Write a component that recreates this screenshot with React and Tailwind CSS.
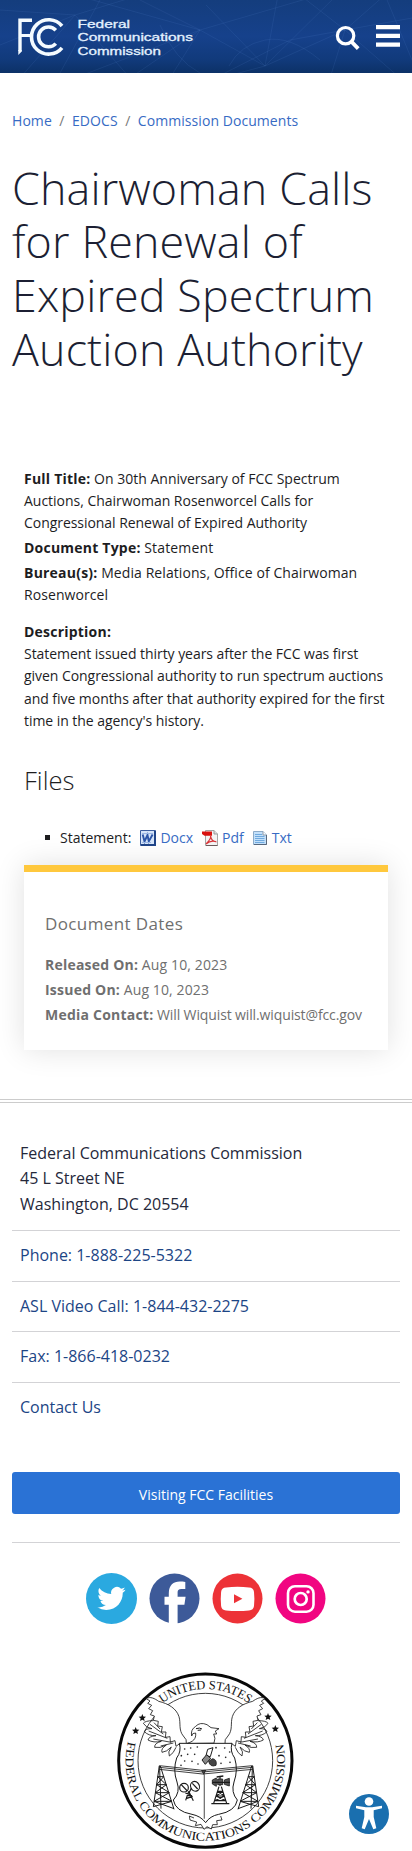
import React from "react";

function HeaderPattern() {
  return (
    <svg className="absolute inset-0" width="412" height="73" viewBox="0 0 412 73" fill="none" stroke="#6f9be0" strokeOpacity="0.11">
      <path d="M75 -5L200 30L330 -8M200 30L265 66L340 -8M265 66L206 5M265 66L278 -5M265 66L220 78M200 30L130 78M200 30L75 78M0 45L75 15L130 78M75 15L20 78M140 0L200 30L170 78M265 66L345 30L412 18M345 30L300 -5M345 30L330 78M345 30L400 78M345 30L385 -5L412 60M100 0L60 73M215 78L290 40L345 30M0 10L75 15L140 -5" />
      <path d="M229 66Q240 45 265 40T320 60M160 25Q175 60 200 73" />
    </svg>
  );
}

function Logo() {
  return (
    <svg width="180" height="44" viewBox="15 14 180 44" fill="none" role="img" aria-label="Federal Communications Commission">
      <g stroke="#f4fbff">
        <path d="M20 51V20.200H32" strokeWidth="3.400" />
        <path d="M21 35.500H32" strokeWidth="3" />
        <path d="M62 26A17.200 17.200 0 1 0 62 47.800" strokeWidth="3.600" />
        <path d="M55.800 30.200A9.900 9.900 0 1 0 55.800 43.600" strokeWidth="3.600" />
      </g>
      <path d="M18.300 50H21.700V51.500L18.300 55Z" fill="#f4fbff" />
      <g fill="#e4f2ff" fontFamily="'Liberation Sans', Arial, sans-serif" fontSize="11.200" stroke="#e4f2ff" strokeWidth="0.300">
        <text x="77.500" y="28" textLength="52.500" lengthAdjust="spacingAndGlyphs">Federal</text>
        <text x="77.500" y="41.300" textLength="115.500" lengthAdjust="spacingAndGlyphs">Communications</text>
        <text x="77.500" y="54.800" textLength="83.500" lengthAdjust="spacingAndGlyphs">Commission</text>
      </g>
    </svg>
  );
}

function Header() {
  return (
    <header className="relative h-[73px] overflow-hidden bg-[linear-gradient(180deg,#143d7d_0%,#16418b_50%,#113a7b_82%,#0c3167_100%)]">
      <HeaderPattern />
      <div className="relative flex items-start justify-between pl-[15px] pr-3 pt-3.5">
        <Logo />
        <div className="flex gap-4 pt-[10px]">
          <svg width="25" height="27" viewBox="0 0 25 27" fill="none" stroke="#fff">
            <circle cx="10.6" cy="11.7" r="8.2" strokeWidth="3.2" />
            <path d="M16.4 17.6L23.2 24.6" strokeWidth="3.8" />
          </svg>
          <svg width="24" height="24" viewBox="0 0 24 24" fill="#fff">
            <path d="M0 1h24v4.200H0zM0 9.800h24v4.200H0zM0 18.600h24v4.200H0z" />
          </svg>
        </div>
      </div>
    </header>
  );
}

const DocxIcon = () => (
  <svg width="16" height="16" viewBox="0 0 16 16" fill="none">
    <path d="M.5.5h15v15H.5z" fill="#d5e4f8" stroke="#3d5f9f" />
    <path d="M15 1v14H1" stroke="#1f4488" strokeWidth="2" />
    <path d="M2.7 4.5L4.5 11.4L7.5 5L8.8 11.4L12.6 4.5" stroke="#2c56a8" strokeWidth="1.9" />
    <path d="M2 3.5h11M2 12.5h9" stroke="#9bb7e4" />
  </svg>
);
const PdfIcon = () => (
  <svg width="16" height="16" viewBox="0 0 16 16" fill="none">
    <path d="M3.5.5H12l3.5 3.5v11.5h-12z" fill="#f3f3f3" stroke="#a5a5a5" />
    <path d="M12 .5v3.5h3.5" fill="#ddd" stroke="#999" />
    <path d="M4 15.5h11.5" stroke="#6b5b5b" />
    <path d="M0 1.5h10v4.3H2.5L0 4z" fill="#d8120f" />
    <path d="M4 14C7 11 9 7.5 8.6 6C9 9 11 11.5 14.3 11.8C10.5 10.5 7 11.5 4 14" stroke="#d9363a" strokeWidth="1.2" />
  </svg>
);
const TxtIcon = () => (
  <svg width="14" height="16" viewBox="0 0 14 16" fill="none">
    <path d="M.5 1.5H10l3.500 3.500v9.500H.5z" fill="#c3e0fa" stroke="#8cabc9" />
    <path d="M10 1.500v3.500h3.500" fill="#fff" stroke="#8a98a8" />
    <path d="M13.500 5v9.500H1" stroke="#56677c" />
    <path d="M2 4.500h7M2 6.500h9.500M2 8.500h9.500M2 10.500h9.500M2 12.500h9.500" stroke="#6fa9de" />
  </svg>
);

function Files() {
  return (
    <ul className="flex h-[22px] items-center pl-[21px] text-[#1d1d1f]">
      <li className="flex items-center leading-[22px]">
        <span className="mr-[10px] h-[5px] w-[5px] bg-[#1d1d1f]" />
        <span className="mr-[9px]">Statement:</span>
        <a className="mr-[9px] flex items-center gap-1 text-[#376bc4]"><DocxIcon />Docx</a>
        <a className="mr-[9px] flex items-center gap-1 text-[#376bc4]"><PdfIcon />Pdf</a>
        <a className="flex items-center gap-[5px] text-[#376bc4]"><TxtIcon />Txt</a>
      </li>
    </ul>
  );
}

function Socials() {
  return (
    <div className="flex justify-center gap-3 pt-[29.500px]">
      <svg width="51" height="51" viewBox="0 0 51 51">
        <circle cx="25.500" cy="25.500" r="25.500" fill="#2aa9e0" />
        <path transform="translate(11.300 11.300) scale(1.180)" fill="#fff" d="M23.950 4.570a10 10 0 0 1-2.820.770 4.960 4.960 0 0 0 2.160-2.720c-.950.550-2 .960-3.130 1.180a4.920 4.920 0 0 0-8.380 4.480C7.690 8.100 4.070 6.130 1.640 3.160a4.820 4.820 0 0 0-.670 2.480c0 1.710.870 3.210 2.190 4.100a4.900 4.900 0 0 1-2.230-.620v.060a4.920 4.920 0 0 0 3.950 4.830 5 5 0 0 1-2.210.080 4.940 4.940 0 0 0 4.600 3.420A9.870 9.870 0 0 1 0 19.540a13.990 13.990 0 0 0 7.550 2.210c9.050 0 14-7.500 14-13.990 0-.210 0-.420-.020-.630a9.940 9.940 0 0 0 2.420-2.560z" />
      </svg>
      <svg width="51" height="51" viewBox="0 0 51 51">
        <circle cx="25.500" cy="25.500" r="25" fill="#3d5a99" />
        <path fill="#fff" d="M19.800 51V31.800h-4.300v-8h4.300v-3.600c0-8 4.600-11.600 11-11.600 2 0 3.800.1 5.500.4v7h-3.900c-3 0-3.800 1.400-3.800 3.600v4.200h8l-1.200 8h-6.800V51z" />
      </svg>
      <svg width="51" height="51" viewBox="0 0 51 51">
        <circle cx="25.500" cy="25.500" r="25" fill="#ed3237" />
        <path fill="#fff" d="M14 14.500Q25.500 13.200 37 14.500Q41.500 14.700 42 19Q42.800 26 42 33Q41.500 37.200 37 37.500Q25.500 38.700 14 37.500Q9.600 37.200 9.100 33Q8.400 26 9.100 19Q9.600 14.700 14 14.500z" />
        <path fill="#ed3237" d="M22 21.300L30.400 25.800L22 30.200z" />
      </svg>
      <svg width="51" height="51" viewBox="0 0 51 51" fill="none">
        <circle cx="25.500" cy="25.500" r="25" fill="#f10581" />
        <rect x="13" y="13.200" width="25.500" height="25.500" rx="7" stroke="#fff" strokeWidth="2.600" />
        <circle cx="25.700" cy="26" r="6" stroke="#fff" strokeWidth="2.700" />
        <circle cx="33" cy="18.900" r="1.700" fill="#fff" />
      </svg>
    </div>
  );
}

const Star = ({ x, y }) => (
  <path transform={`translate(${x} ${y})`} d="M0-11L3-3.500L11-3L5 2.500L7 10L0 6L-7 10L-5 2.500L-11-3L-3-3.500z" fill="#111" stroke="none" />
);

function Wing() {
  return (
    <g>
      <path fill="#fff" d="M139 116C150 108 165 116 176 124C205 131 229 145 237 170C243 190 235 210 250 228Q262 238 259 252L243 264L240 250L228 259L225 242L211 246L210 230L196 232L198 216L184 216L187 200L173 198L175 184L160 181L163 168L151 164L158 152L146 146L155 136L143 130L150 123Z" />
      <path d="M160 182Q135 182 130 190Q137 203 156 206Q136 205 133 215Q146 228 168 227Q146 229 144 240Q160 249 184 244Q163 249 164 262Q180 266 199 255Q182 266 186 277Q200 276 214 261Q202 277 208 288Q221 280 228 262M162 188L180 207M150 193L190 222M146 213L202 235M160 237L214 247M182 258L220 249" />
    </g>
  );
}

function Tower() {
  return (
    <path d="M178 318L160 440M181 318L222 448M179 326L183 446M173 350H191M170 374H199M166 398H208M162 424H216M173 350L199 374M191 350L170 374M170 374L208 398M199 374L166 398M166 398L216 424M208 398L162 424M162 424L222 446M216 424L160 440" strokeWidth="3" />
  );
}

function Seal() {
  return (
    <svg className="block" width="200" height="191" viewBox="0 0 600 573" fill="none" stroke="#1b1b1b" strokeWidth="2.500" role="img" aria-label="Seal of the Federal Communications Commission">
      <defs>
        <path id="sealTop" d="M101 302A215 215 0 0 1 531 302" />
        <path id="sealBottom" d="M86 238A239 239 0 1 0 546 238" />
        <path id="shield" d="M238 250H396Q389 274 404 294Q415 330 402 366Q392 397 412 420Q406 454 356 463Q330 468 317 488Q302 468 276 463Q226 454 220 420Q242 397 231 366Q218 330 230 294Q245 274 238 250Z" />
      </defs>
      <circle cx="316" cy="302" r="260" fill="#fff" stroke="#080808" strokeWidth="9" />
      <circle cx="316" cy="302" r="202" />
      <Star x="127" y="173" />
      <Star x="107" y="212" />
      <Star x="504" y="170" />
      <Star x="526" y="206" />
      <Wing />
      <g transform="translate(634 0) scale(-1 1)"><Wing /></g>
      <g fill="#111" stroke="none" fontFamily="'Liberation Serif', 'Times New Roman', serif">
        <text fontSize="38" textLength="278" lengthAdjust="spacingAndGlyphs"><textPath href="#sealTop" startOffset="199">UNITED STATES</textPath></text>
        <text fontSize="36" textLength="862" lengthAdjust="spacingAndGlyphs"><textPath href="#sealBottom" startOffset="6">FEDERAL COMMUNICATIONS COMMISSION</textPath></text>
      </g>
      <Tower />
      <g transform="translate(636 0) scale(-1 1)"><Tower /></g>
      <path d="M282 474L268 468L270 480L290 486L286 497L303 493L312 508L321 500L334 507L338 494L352 494L350 482L366 480L362 468" fill="#fff" />
      <use href="#shield" fill="#fff" strokeWidth="3" />
      <path d="M178 317L308 331L458 317V328L308 342L178 328ZM178 322L308 336L458 322" />
      <path d="M313 336V476" strokeWidth="4" stroke="#777" />
      <path d="M305 331L311 343L317 331Z" fill="#444" />
      <path fill="#fff" d="M262 250C278 245 289 238 287 219Q276 218 275 228Q271 209 287 199Q300 185 321 194L333 203L357 206L346 213L350 222L341 222Q348 235 342 249Z" />
      <path d="M288 206Q300 202 306 207M293 211L303 210" strokeWidth="3" />
      <g fill="#222" stroke="none">
        <circle cx="254" cy="267" r="2.500" /><circle cx="272" cy="264" r="2.500" /><circle cx="292" cy="261" r="2.500" />
        <circle cx="348" cy="263" r="2.500" /><circle cx="374" cy="264" r="2.500" /><circle cx="389" cy="276" r="2.500" />
        <circle cx="244" cy="287" r="2.500" /><circle cx="263" cy="283" r="2.500" /><circle cx="284" cy="283" r="2.500" />
        <circle cx="254" cy="303" r="2.500" /><circle cx="276" cy="304" r="2.500" /><circle cx="294" cy="312" r="2.500" />
        <circle cx="357" cy="287" r="2.500" /><circle cx="377" cy="292" r="2.500" /><circle cx="390" cy="307" r="2.500" />
        <circle cx="363" cy="310" r="2.500" /><circle cx="243" cy="316" r="2.500" />
      </g>
      <path d="M323 268L339 263L331 290L318 287Z" fill="#fff" strokeWidth="3" />
      <path d="M306 300L320 284L332 295L316 313Z" fill="#888" strokeWidth="3" />
      <path d="M326 304Q330 323 348 316Q352 299 338 296Z" fill="#444" />
      <g strokeWidth="3.500">
        <circle cx="252" cy="383" r="13" />
        <ellipse cx="285" cy="379" rx="13" ry="15" transform="rotate(-25 285 379)" />
        <path d="M243 373L262 393M277 370L293 387M266 394L257 421M266 394L280 422M260 407H276M258 416L278 409M256 399L270 404M274 385L268 397" />
        <path d="M360 350V378M357 380L341 430M364 380L380 430M352 394H370M348 408H374M344 422H378M352 394L374 408M370 394L348 408M348 408L378 422M374 408L344 422M334 431H388" />
      </g>
      <path d="M337 360L349 354V379L337 372ZM353 357H368V374H353ZM373 360L388 355V378L373 373Z" fill="#555" />
      <path d="M337 367H390M350 351L370 348" strokeWidth="4" />
    </svg>
  );
}

const Label = ({ children }) => <b className="tracking-[0.220px]">{children}</b>;

function Row({ children }) {
  return <div className="flex h-[50.700px] items-center border-t border-[#d3d3d6] pl-2 text-[#1c4585]">{children}</div>;
}

export default function App() {
  return (
    <div className="relative h-[1851px] w-[412px] overflow-hidden bg-white font-['Open_Sans',sans-serif] text-[14px] leading-[22.400px] text-[#1d1d1f]">
      <Header />
      <nav className="flex h-[96px] items-start px-3 pt-[37px] tracking-[0.060px] text-[#376bc4]">
        <a>Home</a>
        <span className="px-[7.500px] text-[#777]">/</span>
        <a>EDOCS</a>
        <span className="px-[7.500px] text-[#777]">/</span>
        <a>Commission Documents</a>
      </nav>
      <h1 className="-mt-[8.500px] h-[306px] px-3 text-[44.800px] font-light leading-[53.760px] tracking-[0.150px] text-[#1c1f33]">
        Chairwoman Calls for Renewal of Expired Spectrum Auction Authority
      </h1>
      <main className="px-6">
        <div className="flex h-[154px] flex-col gap-[2.200px] pt-[1px]">
          <p><Label>Full Title:</Label> On 30th Anniversary of FCC Spectrum <span className="tracking-[-0.020px]">Auctions, Chairwoman Rosenworcel Calls for</span> <span className="tracking-[-0.050px]">Congressional Renewal of Expired Authority</span></p>
          <p><Label>Document Type:</Label> <span className="tracking-[0.150px]">Statement</span></p>
          <p><Label>Bureau(s):</Label> <span className="tracking-[0.080px]">Media Relations, Office of Chairwoman Rosenworcel</span></p>
        </div>
        <div className="h-[142px]">
          <p><Label>Description:</Label></p>
          <p className="tracking-[-0.050px]">Statement issued thirty years after the FCC was first given Congressional authority to run spectrum auctions and five months after that authority expired for the first time in the agency's history.</p>
        </div>
        <h2 className="h-[64px] text-[25.600px] font-light leading-[36px]">Files</h2>
        <Files />
        <section className="mt-[16px] h-[185px] border-t-[7px] border-[#ffc83d] bg-white pl-[21px] pt-[40.500px] text-[#6f6f6f] shadow-[0_0_28px_rgba(0,0,0,0.120)]">
          <h3 className="mb-[18px] text-[17px] leading-[24px] tracking-[0.380px]">Document Dates</h3>
          <div className="flex flex-col gap-[2.400px]">
            <p><Label>Released On:</Label> <span className="tracking-[0.120px]">Aug 10, 2023</span></p>
            <p><Label>Issued On:</Label> <span className="tracking-[0.120px]">Aug 10, 2023</span></p>
            <p className="whitespace-nowrap"><Label>Media Contact:</Label> <span className="tracking-[-0.120px]">Will Wiquist will.wiquist@fcc.gov</span></p>
          </div>
        </section>
      </main>
      <footer className="mt-[49px] border-t-4 border-double border-[#ccc]">
        <div className="px-3 pt-[38px] text-[16px] leading-[25.600px]">
          <address className="h-[89.500px] pl-2 not-italic text-[#25283a]">
            Federal Communications Commission<br />45 L Street NE<br />Washington, DC 20554
          </address>
          <Row>Phone: 1-888-225-5322</Row>
          <Row>ASL Video Call: 1-844-432-2275</Row>
          <Row>Fax: 1-866-418-0232</Row>
          <Row>Contact Us</Row>
          <a className="mt-[39.500px] flex h-[42px] items-center justify-center rounded-[3px] bg-[#2a72d5] pt-[4px] text-[14px] text-white">Visiting FCC Facilities</a>
          <div className="mt-7 border-t border-[#d3d3d6]" />
        </div>
        <Socials />
        <div className="mt-[36.500px] pl-[100px]"><Seal /></div>
      </footer>
      <svg className="absolute left-[348px] top-[1793px]" width="42" height="42" viewBox="0 0 42 42">
        <circle cx="21" cy="21" r="20" fill="#1a6faf" />
        <g fill="#fff">
          <circle cx="21" cy="8.500" r="4.300" />
          <path d="M8 12.800L18 14.300H24L34 12.800V15.300L25.700 17.300V24L28.300 35.300L25.300 36.300L21 26L16.700 36.300L13.700 35.300L16.300 24V17.300L8 15.300Z" />
        </g>
      </svg>
    </div>
  );
}
